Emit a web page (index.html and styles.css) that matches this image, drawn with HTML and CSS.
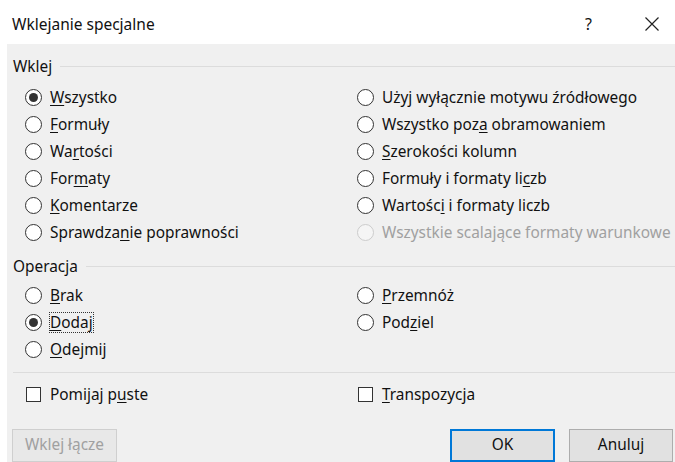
FILE: index.html
```html
<!DOCTYPE html>
<html lang="pl">
<head>
<meta charset="utf-8">
<title>Wklejanie specjalne</title>
<link rel="stylesheet" href="styles.css">
</head>
<body>
<div class="window">
  <header class="titlebar">
    <span class="title">Wklejanie specjalne</span>
    <span class="help">?</span>
    <svg class="close" width="16" height="16" viewBox="0 0 16 16" aria-hidden="true">
      <path d="M1.5 1.5 L14.5 14.5 M14.5 1.5 L1.5 14.5" stroke="#222" stroke-width="1.2" fill="none"/>
    </svg>
  </header>

  <main class="body">
    <div class="group-label"><span>Wklej</span><i class="rule"></i></div>
    <div class="options">
      <label class="opt"><span class="radio checked"></span><span><u>W</u>szystko</span></label>
      <label class="opt"><span class="radio"></span><span>Użyj wyłącznie motywu źródłowego</span></label>
      <label class="opt"><span class="radio"></span><span><u>F</u>ormuły</span></label>
      <label class="opt"><span class="radio"></span><span>Wszystko poz<u>a</u> obramowaniem</span></label>
      <label class="opt"><span class="radio"></span><span>Wa<u>r</u>tości</span></label>
      <label class="opt"><span class="radio"></span><span><u>S</u>zerokości kolumn</span></label>
      <label class="opt"><span class="radio"></span><span>For<u>m</u>aty</span></label>
      <label class="opt"><span class="radio"></span><span>Formuły i formaty li<u>c</u>zb</span></label>
      <label class="opt"><span class="radio"></span><span><u>K</u>omentarze</span></label>
      <label class="opt"><span class="radio"></span><span>Wartośc<u>i</u> i formaty liczb</span></label>
      <label class="opt"><span class="radio"></span><span>Sprawdza<u>n</u>ie poprawności</span></label>
      <label class="opt disabled"><span class="radio"></span><span>Wszystkie scalające formaty warunkowe</span></label>
    </div>

    <div class="group-label second"><span>Operacja</span><i class="rule"></i></div>
    <div class="options ops">
      <label class="opt"><span class="radio"></span><span><u>B</u>rak</span></label>
      <label class="opt"><span class="radio"></span><span><u>P</u>rzemnóż</span></label>
      <label class="opt"><span class="radio checked"></span><span class="focus"><u>D</u>odaj</span></label>
      <label class="opt"><span class="radio"></span><span>Pod<u>z</u>iel</span></label>
      <label class="opt"><span class="radio"></span><span><u>O</u>dejmij</span></label>
    </div>

    <hr class="separator">

    <div class="options checks">
      <label class="opt"><span class="box"></span><span>Pomijaj p<u>u</u>ste</span></label>
      <label class="opt"><span class="box"></span><span><u>T</u>ranspozycja</span></label>
    </div>

    <div class="buttons">
      <button class="btn" disabled>Wklej łącze</button>
      <span class="spacer"></span>
      <button class="btn default">OK</button>
      <button class="btn">Anuluj</button>
    </div>
  </main>
</div>
</body>
</html>
```

FILE: styles.css
```css
* { box-sizing: border-box; }

html, body {
  margin: 0;
  padding: 0;
  background: #ffffff;
}

body {
  font-family: "Noto Sans", "Open Sans", sans-serif;
  font-size: 15.4px;
  color: #111;
  width: 675px;
  height: 462px;
  overflow: hidden;
}

/* window caption */
.titlebar {
  height: 44px;
  display: flex;
  align-items: center;
  padding: 3px 0 0 12px;
  background: #fff;
}

.title {
  font-size: 15.5px;
  flex: 1;
  color: #111;
}

.help {
  font-size: 16px;
  margin-right: 52px;
  color: #111;
}

.close {
  margin-right: 15px;
}

/* dialog client area */
.body {
  margin-left: 7px;
  background: #f0f0f0;
  height: 418px;
  padding: 13px 0 0 6px;
}

.group-label {
  display: flex;
  align-items: center;
  height: 18px;
}

.group-label span {
  margin-right: 8px;
}

.group-label.second {
  margin-top: 11px;
}

.rule {
  flex: 1;
  height: 1px;
  background: #dcdcdc;
}

.options {
  display: grid;
  grid-template-columns: 332px 1fr;
  margin: 9px 0 0 12px;
}

.options.ops {
  margin-top: 7px;
}

.opt {
  height: 27px;
  display: flex;
  align-items: center;
  white-space: nowrap;
}

.opt u {
  text-decoration: underline;
  text-underline-offset: 2px;
}

.radio {
  width: 17px;
  height: 17px;
  border: 1px solid #333;
  border-radius: 50%;
  background: #fff;
  margin-right: 8px;
  flex: none;
  display: flex;
  align-items: center;
  justify-content: center;
}

.radio.checked::after {
  content: "";
  width: 9px;
  height: 9px;
  border-radius: 50%;
  background: #333;
}

.disabled {
  color: #a0a0a0;
}

.disabled .radio {
  border-color: #cccccc;
  background: #f5f5f5;
}

.focus {
  outline: 1px dotted #333;
  outline-offset: 0;
  line-height: 19px;
}

.separator {
  border: 0;
  height: 1px;
  background: #dcdcdc;
  margin: 9px 0 0 0;
}

.options.checks {
  margin-top: 8px;
}

.box {
  width: 15px;
  height: 15px;
  border: 1px solid #333;
  background: #fff;
  margin: 0 9px 0 1px;
  flex: none;
}

/* command buttons */
.buttons {
  display: flex;
  margin-top: 21px;
  height: 33px;
}

.btn {
  font-family: inherit;
  font-size: 15.4px;
  height: 33px;
  background: #e1e1e1;
  border: 1px solid #adadad;
  color: #111;
  padding: 0 0 2px;
  width: 105px;
  margin-left: -1px;
}

.btn[disabled] {
  color: #a0a0a0;
  background: #e8e8e8;
  border-color: #cfcfcf;
}

.btn.default {
  border: 2px solid #0078d7;
  margin-right: 15px;
}

.spacer {
  flex: 1;
}

.btn:last-child {
  width: 104px;
  margin-right: 2px;
}
```
